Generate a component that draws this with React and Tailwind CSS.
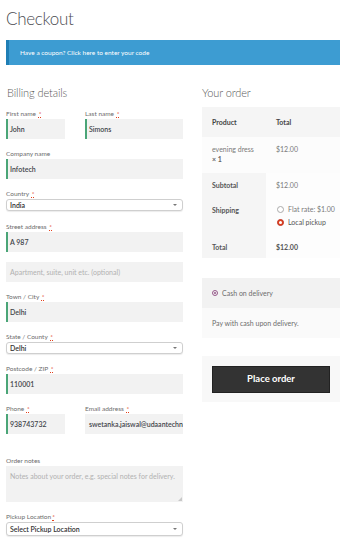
import React from "react";

const req = <span className="text-[#e2401c] underline decoration-dotted ml-[1px]">*</span>;

function Label({ text, required, className = "" }) {
  return (
    <div className={`h-[9px] leading-[9px] text-[6.5px] text-[#6d6d6d] ${className}`}>
      {text}
      {required && req}
    </div>
  );
}

function Input({ value, placeholder, valid = true, className = "" }) {
  return (
    <div
      className={`h-[20px] bg-[#f2f2f2] flex items-center pl-[4px] text-[7px] overflow-hidden whitespace-nowrap ${
        valid ? "shadow-[inset_2px_0_0_#4aa577]" : ""
      } ${className}`}
    >
      {value ? (
        <span className="font-semibold text-[#43454b]">{value}</span>
      ) : (
        <span className="text-[#b1b1b1]">{placeholder}</span>
      )}
    </div>
  );
}

function Select({ value, h = "h-[12px]", className = "" }) {
  return (
    <div
      className={`${h} bg-white border border-[#cfcfcf] rounded-[3px] shadow-[0_1px_1px_rgba(0,0,0,0.08)] flex items-center justify-between pl-[3px] pr-[4px] text-[7px] font-semibold text-[#333] ${className}`}
    >
      <span>{value}</span>
      <span className="w-0 h-0 border-x-[2px] border-x-transparent border-t-[2px] border-t-[#777] mr-[1px]" />
    </div>
  );
}

function Radio({ checked }) {
  return checked ? (
    <span className="w-[7px] h-[7px] rounded-full bg-[#e2401c] border border-[#c0392b] flex items-center justify-center">
      <span className="w-[3px] h-[3px] rounded-full bg-white" />
    </span>
  ) : (
    <span className="w-[7px] h-[7px] rounded-full bg-white border border-[#aaa]" />
  );
}

export default function App() {
  return (
    <div className="w-[340px] h-[555px] overflow-hidden bg-white font-['Lato',sans-serif] text-[#43454b]">
      {/* Title */}
      <div className="pl-[6px] pt-[8px] h-[32px] text-[17px] tracking-[-0.3px] font-light leading-[22px] text-[#4a4b50]">
        Checkout
      </div>

      {/* Coupon */}
      <div className="mt-[8px] ml-[6px] h-[25px] bg-[#3d9cd2] border-l-[3px] border-[#1f7eb5] flex items-center pl-[11px] text-white text-[6.5px]">
        Have a coupon? Click here to enter your code
      </div>

      <div className="flex pl-[6px] mt-[21px]">
        {/* Billing */}
        <div className="w-[177px] shrink-0">
          <div className="h-[14px] leading-[14px] text-[11px] tracking-[-0.1px] font-light text-[#5a5a5a] pl-[1px]">
            Billing details
          </div>

          <div className="flex justify-between mt-[9px]">
            <div className="w-[59px]">
              <Label text="First name " required />
              <Input value="John" className="mt-[1px]" />
            </div>
            <div className="w-[98px]">
              <Label text="Last name " required />
              <Input value="Simons" className="mt-[1px]" />
            </div>
          </div>

          <Label text="Company name" className="mt-[10px]" />
          <Input value="Infotech" className="mt-[1px]" />

          <Label text="Country " required className="mt-[10px]" />
          <Select value="India" className="mt-[1px]" />

          <Label text="Street address " required className="mt-[11px]" />
          <Input value="A 987" className="mt-[1px]" />
          <Input placeholder="Apartment, suite, unit etc. (optional)" valid={false} className="mt-[10px]" />

          <Label text="Town / City " required className="mt-[10px]" />
          <Input value="Delhi" className="mt-[1px]" />

          <Label text="State / County " required className="mt-[10px]" />
          <Select value="Delhi" className="mt-[1px]" />

          <Label text="Postcode / ZIP " required className="mt-[10px]" />
          <Input value="110001" className="mt-[1px]" />

          <div className="flex justify-between mt-[10px]">
            <div className="w-[59px]">
              <Label text="Phone " required />
              <Input value="938743732" className="mt-[1px]" />
            </div>
            <div className="w-[98px]">
              <Label text="Email address " required />
              <Input value="swetanka.jaiswal@udaantechnologies.com" valid={false} className="mt-[1px]" />
            </div>
          </div>

          <Label text="Order notes" className="mt-[22px]" />
          <div className="relative mt-[1px] h-[36px] bg-[#f2f2f2] px-[4px] pt-[5px] text-[7px] text-[#b1b1b1]">
            Notes about your order, e.g. special notes for delivery.
            <span className="absolute right-[1px] bottom-[1px] w-0 h-0 border-l-[4px] border-l-transparent border-b-[4px] border-b-[#c8c8c8]" />
          </div>

          <Label text="Pickup Location" required className="mt-[10px]" />
          <Select value="Select Pickup Location" h="h-[14px]" className="mt-[1px]" />
        </div>

        {/* Order */}
        <div className="ml-[19px] flex-1">
          <div className="h-[14px] leading-[14px] text-[11px] tracking-[-0.1px] font-light text-[#5a5a5a]">
            Your order
          </div>

          <div className="mt-[7px] text-[7px]">
            <div className="flex h-[30px] items-center bg-[#f5f5f5] font-bold text-[#444]">
              <div className="w-[64px] pl-[10px]">Product</div>
              <div className="pl-[10px]">Total</div>
            </div>
            <div className="flex h-[36px] bg-[#fcfcfc] text-[#7a7a7a] pt-[7px]">
              <div className="w-[64px] pl-[10px] leading-[10px]">
                evening dress
                <div className="font-bold text-[#666]">× 1</div>
              </div>
              <div className="pl-[10px] leading-[10px]">$12.00</div>
            </div>

            <div className="flex">
              <div className="w-[64px] bg-[#f5f5f5] pl-[10px] font-bold text-[#555] h-[85px]">
                <div className="mt-[7px] leading-[10px]">Subtotal</div>
                <div className="mt-[15px] leading-[10px]">Shipping</div>
                <div className="mt-[27px] leading-[10px]">Total</div>
              </div>
              <div className="flex-1 bg-[#fdfdfd] pl-[10px] text-[#7a7a7a]">
                <div className="mt-[7px] leading-[10px]">$12.00</div>
                <div className="mt-[14px] flex items-center gap-[4px] leading-[10px] pl-[1px]">
                  <Radio />
                  <span>Flat rate: $1.00</span>
                </div>
                <div className="mt-[3px] flex items-center gap-[4px] leading-[10px] pl-[1px]">
                  <Radio checked />
                  <span className="text-[#555]">Local pickup</span>
                </div>
                <div className="mt-[15px] leading-[10px] font-bold text-[#555]">$12.00</div>
              </div>
            </div>
          </div>

          {/* Payment */}
          <div className="mt-[20px] text-[7px]">
            <div className="h-[30px] bg-[#f2f2f2] flex items-center pl-[10px] gap-[4px] text-[#6d6d6d]">
              <span className="w-[6px] h-[6px] rounded-full border-[1.5px] border-[#96588a] flex items-center justify-center">
                <span className="w-[2px] h-[2px] rounded-full bg-[#96588a]" />
              </span>
              <span>Cash on delivery</span>
            </div>
            <div className="h-[30px] bg-[#fafafa] flex items-center pl-[10px] text-[#6d6d6d]">
              Pay with cash upon delivery.
            </div>
          </div>

          <div className="mt-[18px] h-[46px] bg-[#f8f8f8] pl-[10px] pt-[10px]">
            <div className="w-[118px] h-[27px] bg-[#333333] border border-[#222] flex items-center justify-center text-white font-bold text-[9.5px]">
              Place order
            </div>
          </div>
        </div>
      </div>
    </div>
  );
}
